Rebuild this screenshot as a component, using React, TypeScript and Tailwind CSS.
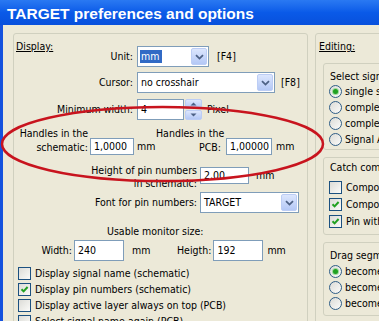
import React from "react";

// small XP-style widgets for the dialog

function Chevron() {
  return (
    <svg width="9" height="6" viewBox="0 0 9 6">
      <path d="M1 1.2 L4.5 4.6 L8 1.2" fill="none" stroke="#4D6185" strokeWidth="1.8" />
    </svg>
  );
}

function Combo({ width, value, highlight }: { width: string; value: string; highlight?: boolean }) {
  return (
    <div className={`flex h-[21px] shrink-0 border border-[#7F9DB9] bg-white ${width}`}>
      <div className="flex flex-1 items-center pl-[2px]">
        <span className={highlight ? "bg-[#316AC5] pl-[1px] pr-[3px] text-white" : "pl-[1px]"}>{value}</span>
      </div>
      <div className="m-[1px] flex w-[16px] items-center justify-center rounded-[2px] border border-[#BCCDF5] bg-gradient-to-b from-[#DCE6FD] to-[#B4C8F6]">
        <Chevron />
      </div>
    </div>
  );
}

function Field({ width, height, value }: { width: string; height: string; value: string }) {
  return (
    <div className={`flex shrink-0 items-center border border-[#7F9DB9] bg-white pl-[3px] ${width} ${height}`}>
      {value}
    </div>
  );
}

function Spin() {
  return (
    <div className="ml-[1px] flex h-[21px] w-[17px] shrink-0 flex-col gap-[1px]">
      {[true, false].map((up) => (
        <div
          key={String(up)}
          className="flex flex-1 items-center justify-center rounded-[2px] border border-[#BCCDF5] bg-gradient-to-b from-[#DCE6FD] to-[#B4C8F6]"
        >
          <svg width="7" height="4" viewBox="0 0 7 4">
            <path d={up ? "M0.5 3.5 L3.5 0.5 L6.5 3.5 Z" : "M0.5 0.5 L3.5 3.5 L6.5 0.5 Z"} fill="#4D6185" />
          </svg>
        </div>
      ))}
    </div>
  );
}

function Check({ checked }: { checked?: boolean }) {
  return (
    <div className="flex h-[13px] w-[13px] shrink-0 items-center justify-center border border-[#1C5180] bg-gradient-to-br from-[#DCDCD7] to-[#FBFBF9]">
      {checked && (
        <svg width="11" height="11" viewBox="0 0 11 11">
          <path d="M2.5 5.2 L4.6 7.4 L8.6 3" fill="none" stroke="#21A121" strokeWidth="2" />
        </svg>
      )}
    </div>
  );
}

function Radio({ checked }: { checked?: boolean }) {
  return (
    <div className="flex h-[13px] w-[13px] shrink-0 items-center justify-center rounded-full border border-[#2F5D87] bg-gradient-to-br from-[#DCDCD7] to-[#FBFBF9]">
      {checked && <div className="h-[5px] w-[5px] rounded-full bg-[#21A121] shadow-[0_0_0_1px_#9CDA9C]" />}
    </div>
  );
}

const checks = [
  { text: "Display signal name (schematic)", checked: false },
  { text: "Display pin numbers (schematic)", checked: true },
  { text: "Display active layer always on top (PCB)", checked: false },
  { text: "Select signal name again (PCB)", checked: false },
];

export default function App() {
  return (
    <div className="relative flex h-[321px] w-[379px] flex-col overflow-hidden bg-[#ECE9D8] font-['DejaVu_Sans_Condensed','DejaVu_Sans',sans-serif] text-[10.5px] leading-[13px] text-black">
      {/* title bar */}
      <div className="flex h-[25px] shrink-0 items-center bg-gradient-to-b from-[#2A79F2] via-[#0A5AE8] to-[#0850DC] pl-[7px] pt-[1px] font-['Liberation_Sans',Arial,sans-serif] text-[15.5px] font-bold text-white">
        TARGET preferences and options
      </div>

      <div className="flex flex-1">
        <div className="w-[3px] shrink-0 bg-[#1552DE]" />
        <div className="flex flex-1 gap-[7px] pl-[10px] pt-[8px]">
          {/* Display */}
          <div className="flex h-[300px] w-[295px] shrink-0 flex-col rounded-[3px] border border-[#D0D0BF]">
            <div className="mt-[6px] flex items-start">
              <div className="flex w-[119px] justify-between">
                <span className="pl-[2px] underline">Display:</span>
                <span className="mt-[10px]">Unit:</span>
              </div>
              <div className="ml-[4px] mt-[6px]">
                <Combo width="w-[72px]" value="mm" highlight />
              </div>
              <span className="ml-[8px] mt-[10px]">[F4]</span>
            </div>

            <div className="mt-[5px] flex items-center">
              <span className="w-[119px] text-right">Cursor:</span>
              <div className="ml-[4px]">
                <Combo width="w-[138px]" value="no crosshair" />
              </div>
              <span className="ml-[6px]">[F8]</span>
            </div>

            <div className="mt-[6px] flex items-center">
              <span className="w-[119px] text-right">Minimum width:</span>
              <div className="ml-[4px]">
                <Field width="w-[47px]" height="h-[21px]" value="4" />
              </div>
              <Spin />
              <span className="ml-[5px]">Pixel</span>
            </div>

            <div className="mt-[6px] flex items-end">
              <div className="w-[74px] whitespace-nowrap text-right leading-[14px]">
                <div>Handles in the</div>
                <div>schematic:</div>
              </div>
              <div className="mb-[-1px] ml-[2px] flex items-center">
                <Field width="w-[44px]" height="h-[17px]" value="1,0000" />
                <span className="ml-[3px] w-[19px]">mm</span>
              </div>
              <div className="w-[65px] whitespace-nowrap text-right leading-[14px]">
                <div>Handles in the</div>
                <div>PCB:</div>
              </div>
              <div className="mb-[-1px] ml-[5px] flex items-center">
                <Field width="w-[46px]" height="h-[17px]" value="1,00000" />
                <span className="ml-[4px]">mm</span>
              </div>
            </div>

            <div className="mt-[10px] flex items-start">
              <div className="w-[183px] text-right">
                <div>Height of pin numbers</div>
                <div>in schematic:</div>
              </div>
              <div className="ml-[3px] mt-[3px] flex items-center">
                <Field width="w-[49px]" height="h-[17px]" value="2,00" />
                <span className="ml-[7px]">mm</span>
              </div>
            </div>

            <div className="mt-[2px] flex items-center">
              <span className="w-[183px] text-right">Font for pin numbers:</span>
              <div className="ml-[3px]">
                <Combo width="w-[99px]" value="TARGET" />
              </div>
            </div>

            <div className="mt-[12px] pl-[93px]">Usable monitor size:</div>

            <div className="mt-[2px] flex items-center">
              <span className="w-[58px] text-right">Width:</span>
              <div className="ml-[2px]">
                <Field width="w-[50px]" height="h-[21px]" value="240" />
              </div>
              <span className="w-[53px] pl-[8px]">mm</span>
              <span>Heigth:</span>
              <div className="ml-[2px]">
                <Field width="w-[50px]" height="h-[21px]" value="192" />
              </div>
              <span className="ml-[4px]">mm</span>
            </div>

            <div className="mt-[6px] flex flex-col gap-[3px] pl-[4px]">
              {checks.map((c) => (
                <div key={c.text} className="flex h-[13px] items-center">
                  <Check checked={c.checked} />
                  <span className="ml-[4px] whitespace-nowrap">{c.text}</span>
                </div>
              ))}
            </div>
          </div>

          {/* Editing */}
          <div className="flex h-[300px] w-[130px] shrink-0 flex-col rounded-[3px] border border-[#D0D0BF]">
            <span className="mt-[6px] pl-[3px] underline">Editing:</span>

            <div className="ml-[7px] mt-[10px] flex flex-col rounded-[3px] border border-[#D0D0BF] pb-[3px] pl-[5px] pt-[6px]">
              <span className="pl-[1px]">Select signal</span>
              <div className="mt-[2px] flex flex-col gap-[3px]">
                {["single segment", "complete track", "complete signal", "Signal Assignment"].map((t, i) => (
                  <div key={t} className="flex h-[13px] items-center">
                    <Radio checked={i === 0} />
                    <span className="ml-[3px] whitespace-nowrap">{t}</span>
                  </div>
                ))}
              </div>
            </div>

            <div className="ml-[7px] mt-[7px] flex flex-col rounded-[3px] border border-[#D0D0BF] pb-[6px] pl-[5px] pt-[3px]">
              <span className="pl-[1px]">Catch components</span>
              <div className="mt-[7px] flex flex-col gap-[4px]">
                {[
                  { t: "Component outline", c: false },
                  { t: "Component origin", c: true },
                  { t: "Pin with signal", c: true },
                ].map((r) => (
                  <div key={r.t} className="flex h-[13px] items-center">
                    <Check checked={r.c} />
                    <span className="ml-[4px] whitespace-nowrap">{r.t}</span>
                  </div>
                ))}
              </div>
            </div>

            <div className="ml-[7px] mt-[7px] flex flex-col rounded-[3px] border border-[#D0D0BF] pb-[5px] pl-[5px] pt-[6px]">
              <span className="pl-[1px]">Drag segments</span>
              <div className="mt-[3px] flex flex-col gap-[3px]">
                {["become diagonal", "become orthogonal", "become free"].map((t, i) => (
                  <div key={t} className="flex h-[13px] items-center">
                    <Radio checked={i === 0} />
                    <span className="ml-[3px] whitespace-nowrap">{t}</span>
                  </div>
                ))}
              </div>
            </div>
          </div>
        </div>
      </div>

      {/* hand-drawn red marking */}
      <svg className="pointer-events-none absolute left-0 top-0" width="379" height="321">
        <ellipse cx="162.5" cy="144" rx="160.5" ry="37" fill="none" stroke="#C8141E" strokeWidth="2.5" />
      </svg>
    </div>
  );
}
